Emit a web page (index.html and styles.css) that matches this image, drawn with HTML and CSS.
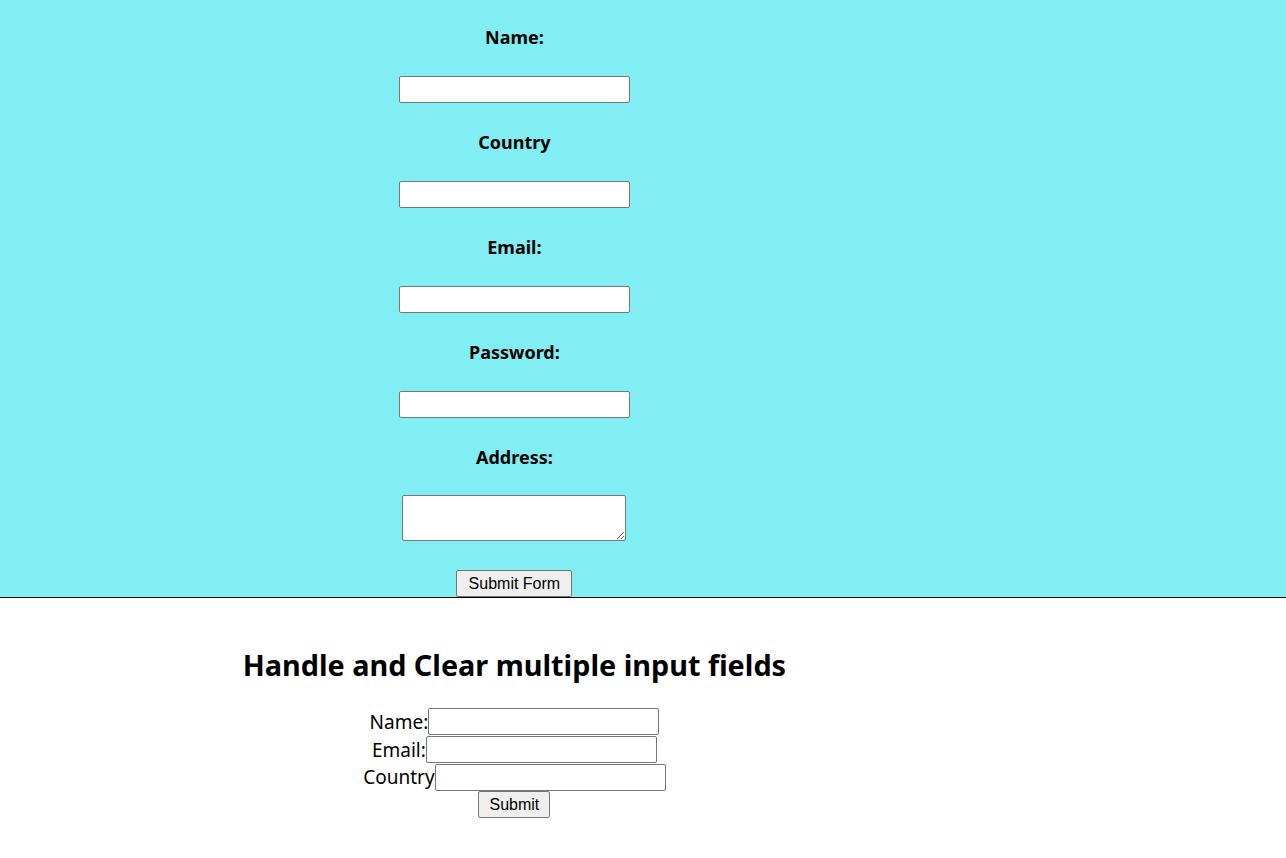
FILE: index.html
```html
<!DOCTYPE html>
<html>
<head>
<meta charset="utf-8">
<link rel="stylesheet" href="styles.css">
</head>
<body>
<div class="top">
  <form class="main-form">
    <label class="field-label">Name:</label>
    <input class="field" type="text">
    <label class="field-label">Country</label>
    <input class="field" type="text">
    <label class="field-label">Email:</label>
    <input class="field" type="text">
    <label class="field-label">Password:</label>
    <input class="field" type="password">
    <label class="field-label label-last">Address:</label>
    <textarea class="area"></textarea>
    <button class="btn btn-form" type="button">Submit Form</button>
  </form>
</div>
<div class="bottom">
  <h2 class="title">Handle and Clear multiple input fields</h2>
  <form class="multi">
    <div class="row"><span class="row-label">Name:</span><input class="field" type="text"></div>
    <div class="row"><span class="row-label">Email:</span><input class="field" type="text"></div>
    <div class="row"><span class="row-label">Country</span><input class="field" type="text"></div>
    <button class="btn btn-small" type="button">Submit</button>
  </form>
</div>
</body>
</html>
```
FILE: styles.css
```css
body {
  margin: 0;
  font-family: "Noto Sans", "DejaVu Sans", sans-serif;
  color: #000;
  background: #fff;
}
.top {
  background: #80eef2;
  border-bottom: 1px solid #000;
}
.main-form {
  width: 80%;
  display: flex;
  flex-direction: column;
  align-items: center;
  padding-top: 25px;
}
.field-label {
  font-weight: bold;
  font-size: 18px;
  line-height: 24px;
  height: 24px;
  margin-bottom: 27px;
}
.field-label.label-last {
  margin-bottom: 26px;
}
.field {
  box-sizing: border-box;
  width: 231px;
  height: 27px;
  border: 1px solid #767676;
  border-radius: 2px;
  background: #fff;
  padding: 1px 2px;
  margin: 0;
  font-family: "Liberation Sans", Arial, sans-serif;
  font-size: 16px;
}
.main-form .field {
  margin-bottom: 27px;
}
.area {
  box-sizing: border-box;
  width: 224px;
  height: 46px;
  border: 1px solid #767676;
  border-radius: 2px;
  margin: 0 0 29px;
  padding: 2px;
  font-family: "Liberation Mono", monospace;
  font-size: 13px;
}
.btn {
  box-sizing: border-box;
  height: 27px;
  margin: 0;
  border: 1px solid #767676;
  border-radius: 2px;
  background: #efefef;
  color: #000;
  font-family: "Liberation Sans", Arial, sans-serif;
  font-size: 16px;
  line-height: 18px;
  padding: 1px 6px;
}
.btn-form {
  width: 116px;
}
.btn-small {
  width: 72px;
}
.bottom {
  width: 80%;
  display: flex;
  flex-direction: column;
  align-items: center;
  padding-top: 48px;
}
.title {
  margin: 0 0 24px;
  font-size: 28.8px;
  line-height: 38px;
  font-weight: bold;
}
.multi {
  display: flex;
  flex-direction: column;
  align-items: center;
}
.row {
  display: flex;
  align-items: center;
  height: 27.7px;
}
.row-label {
  font-size: 19px;
}
```
